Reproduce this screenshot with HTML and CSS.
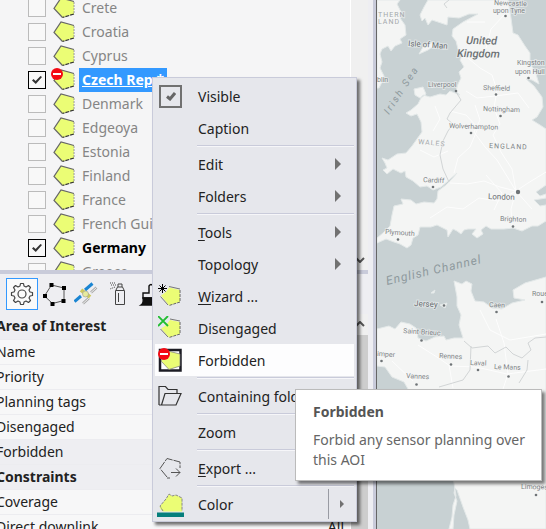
FILE: index.html
```html
<!DOCTYPE html>
<html lang="en">
<head>
    <meta charset="UTF-8">
    <meta name="viewport" content="width=device-width, initial-scale=1.0">
    <title>Areas of Interest</title>
    <link rel="stylesheet" href="styles.css">
</head>
<body>
    <!-- shared icon shapes -->
    <svg class="symbols" aria-hidden="true">
        <symbol id="aoi" viewBox="0 0 22 22">
            <path d="M1 11.5 8 1 21 4.500V17L9.500 20.500Z" fill="#ebfd75"/>
            <path d="M9.500 20.500 1 11.500 8 1 21 4.500" fill="none" stroke="#666" stroke-width="1.200"/>
            <path d="M21 5V17" stroke="#999" stroke-dasharray="2 1"/>
            <path d="M21 17 9.500 20.500" stroke="#333" stroke-width="1.200" stroke-dasharray="4 1"/>
        </symbol>
        <symbol id="stop" viewBox="0 0 12 12">
            <circle cx="6" cy="6" r="6" fill="#f40a14"/>
            <path d="M2 6H10" stroke="#fff" stroke-width="2"/>
        </symbol>
    </svg>

    <div class="app">
        <div class="sidebar">
            <div class="tree-panel">
                <ul class="tree">
                    <li><input type="checkbox" id="a1"><svg class="aoi"><use href="#aoi"/></svg><label for="a1">Crete</label></li>
                    <li><input type="checkbox" id="a2"><svg class="aoi"><use href="#aoi"/></svg><label for="a2">Croatia</label></li>
                    <li><input type="checkbox" id="a3"><svg class="aoi"><use href="#aoi"/></svg><label for="a3">Cyprus</label></li>
                    <li class="selected"><input type="checkbox" id="a4" checked><svg class="aoi"><use href="#aoi"/><use href="#stop" x="-2" y="-1" width="12" height="12"/></svg><label for="a4">Czech Rep.*</label></li>
                    <li><input type="checkbox" id="a5"><svg class="aoi"><use href="#aoi"/></svg><label for="a5">Denmark</label></li>
                    <li><input type="checkbox" id="a6"><svg class="aoi"><use href="#aoi"/></svg><label for="a6">Edgeoya</label></li>
                    <li><input type="checkbox" id="a7"><svg class="aoi"><use href="#aoi"/></svg><label for="a7">Estonia</label></li>
                    <li><input type="checkbox" id="a8"><svg class="aoi"><use href="#aoi"/></svg><label for="a8">Finland</label></li>
                    <li><input type="checkbox" id="a9"><svg class="aoi"><use href="#aoi"/></svg><label for="a9">France</label></li>
                    <li><input type="checkbox" id="a10"><svg class="aoi"><use href="#aoi"/></svg><label for="a10">French Guiana</label></li>
                    <li class="active"><input type="checkbox" id="a11" checked><svg class="aoi"><use href="#aoi"/></svg><label for="a11">Germany</label></li>
                    <li><input type="checkbox" id="a12"><svg class="aoi"><use href="#aoi"/></svg><label for="a12">Greece</label></li>
                </ul>
                <div class="scrollbar down">
                    <svg viewBox="0 0 10 6"><path d="M1 1 5 5 9 1"/></svg>
                </div>
            </div>

            <div class="props-panel">
                <div class="toolbar">
                    <button class="tool on" aria-label="Properties">
                        <svg viewBox="0 0 24 24" fill="none" stroke="#444" stroke-width="1.200">
                            <path d="M10 4 10.500 1.500H13.500L14 4 16 5 18.500 3.500 20.500 5.500 19 8 20 10 22.500 10.500V13.500L20 14 19 16 20.500 18.500 18.500 20.500 16 19 14 20 13.500 22.500H10.500L10 20 8 19 5.500 20.500 3.500 18.500 5 16 4 14 1.500 13.500V10.500L4 10 5 8 3.500 5.500 5.500 3.500 8 5Z" stroke-linejoin="round"/>
                            <circle cx="12" cy="12" r="4"/>
                        </svg>
                    </button>
                    <button class="tool" aria-label="Shape">
                        <svg viewBox="0 0 24 24">
                            <path d="M2.500 14 9.500 3 22 6V18.500L10.500 21.500Z" fill="none" stroke="#555"/>
                            <path d="M1 12H5V16H1ZM7.500 1H11.500V5H7.500ZM20 4H24V8H20ZM19.500 17H23.500V21H19.500ZM8.500 20H12.500V24H8.500Z"/>
                        </svg>
                    </button>
                    <button class="tool" aria-label="Satellite">
                        <svg viewBox="0 0 24 24">
                            <path d="M18.500 1.500 11 8M7 14 0.500 19.500" stroke="#1b85d2" stroke-width="3"/>
                            <path d="M22.500 5.500 17 10.500M15 16 9 21.500" stroke="#aaa" stroke-width="2.600"/>
                            <path d="M22.500 5.500 17 10.500M15 16 9 21.500" stroke="#f0f0f0"/>
                            <path d="M7 8 16 15" stroke="#cfc95c" stroke-width="4"/>
                            <circle cx="11.500" cy="12" r="3" fill="#e7ea9c" stroke="#999" stroke-width=".6"/>
                        </svg>
                    </button>
                    <button class="tool" aria-label="Spray">
                        <svg viewBox="0 0 24 24" fill="none" stroke="#444">
                            <path d="M9.500 8.500H18.500V22.500H9.500ZM10 8 11.500 5H16.500L18 8M12 5V2H16V5M12.500 11V20"/>
                            <path d="M10 3H4M9 5 4 7M9 1 4 1" stroke-dasharray="1 1"/>
                        </svg>
                    </button>
                    <button class="tool" aria-label="Brush">
                        <svg viewBox="0 0 24 24" fill="none" stroke="#111" stroke-width="1.400">
                            <path d="M11 11V4Q13 1 15 4V11H21V16H5V11Z"/>
                            <path d="M5 16H21V23H3Q6 21 5 16Z" fill="#111"/>
                        </svg>
                    </button>
                </div>
                <div class="props-body">
                    <table class="props">
                        <tr class="group"><th colspan="2">Area of Interest</th></tr>
                        <tr><td>Name</td><td></td></tr>
                        <tr><td>Priority</td><td></td></tr>
                        <tr><td>Planning tags</td><td></td></tr>
                        <tr><td>Disengaged</td><td></td></tr>
                        <tr class="current"><td>Forbidden</td><td></td></tr>
                        <tr class="group"><th colspan="2">Constraints</th></tr>
                        <tr><td>Coverage</td><td></td></tr>
                        <tr><td>Direct downlink</td><td>All</td></tr>
                    </table>
                    <div class="scrollbar up">
                        <svg viewBox="0 0 10 6"><path d="M1 5 5 1 9 5"/></svg>
                        <div class="thumb"></div>
                    </div>
                </div>
            </div>
        </div>

        <div class="map">
            <svg viewBox="377 0 169 529" preserveAspectRatio="xMinYMin slice">
                <g class="land">
                    <!-- Ireland -->
                    <path d="M377 0H400L397 4 401 12 400 18 405 25 406 35 400 39 402 43 395 46 391 51 388 46 382 49 380 54 382 62 380 68 384 76 381 84 379 88H377Z"/>
                    <!-- Isle of Man -->
                    <path d="M419 54 423 47 433 42 435 45 428 50Z"/>
                    <!-- Great Britain -->
                    <path d="M428 0 424 7 420 15 422 21 425 18 428 25 432 20 441 23 447 25 448 17 459 18 469 14 478 14 463 22 453 29 452 36 456 41 458 49 463 54 460 60 464 67 459 72 461 78 458 84 456 91 460 95 450 91 446 95 440 94 430 97 423 95 420 98 415 95 414 89 423 87 426 94 421 98 418 104 411 110 406 113 411 116 417 114 421 122 422 132 417 139 412 146 406 153 397 154 388 160 382 158 385 163 387 168 383 170 387 174 393 169 401 173 405 171 406 177 413 181 420 187 427 186 433 190 441 187 448 181 457 173 452 179 446 185 438 191 437 199 434 203 424 202 416 204 411 200 401 199 403 204 394 206 392 215 390 226 383 233 377 238V243L386 239 394 242 400 244 407 248 411 245 413 238 418 235 420 227 431 227 437 225 447 230 448 237 453 229 457 231 461 234 464 230 468 229 476 229 472 234 477 238 483 234 481 230 486 226 491 229 504 229 513 228 522 231 532 226 538 226 546 221V205L540 206 534 200 546 198V194L540 196 536 192 546 185V129L540 125 532 120 537 117 543 107 542 97 534 86 526 79 532 80 539 84 536 74 530 63 530 53 525 46 518 35 513 33 511 18 508 0Z"/>
                    <!-- France -->
                    <path d="M377 329 389 326 395 329 401 322 410 324 416 328 418 338 426 341 435 337 444 336 446 340 454 338 463 338 459 325 461 315 457 306 457 297 454 281 462 284 466 281 472 284 471 291 475 301 484 302 492 308 502 309 512 303 525 300 514 298 513 290 525 283 546 277V529H470L468 520 463 507 457 490 455 488 454 493 457 501 454 515 453 529H449L452 517 453 505 456 496 454 483 445 460 443 440 432 424 420 407 408 389 404 382 392 377 385 367 377 366Z"/>
                    <path d="M431 293 435 290 434 293ZM440 305 447 303 445 308Z"/>
                </g>
                <g class="roads">
                    <path d="M463 54 480 68 492 75 497 90 494 108 500 124 493 135 501 152 512 169 516 191M466 91 477 98 495 96 518 93 529 108M475 105 480 120 474 132 485 147 497 160 516 191 532 209M450 111 466 115 478 128 470 147 458 158 454 173M450 183 467 184 484 181 500 187 516 191 528 183 546 172M430 218 447 207 463 209 479 198 498 201 516 191 511 209 512 225M486 48 491 29 505 14M467 22 485 22M435 106 440 119 433 131M420 150 434 157 448 151M494 210 502 193 486 175M480 310 490 330 510 340 546 334M418 345 440 359 450 366 476 367 507 374 546 369M392 361 413 381M449 365 453 388M496 319 504 343 508 374 503 389"/>
                </g>
                <g class="borders">
                    <path d="M449 0 444 4 447 8M456 92 461 100 450 113 447 119 453 124 448 131 443 141 440 155 443 169 449 182M464 341 472 348 488 346 495 353 506 347 513 354 522 358 531 350 528 343 535 338 546 337M471 346 470 370 463 380 439 387M528 360 527 370 519 383"/>
                </g>
                <g class="water">
                    <text transform="translate(389 115) rotate(-57)" class="sea small">Irish Sea</text>
                    <text transform="translate(387 285) rotate(-13)" class="sea">English Channel</text>
                </g>
                <g class="labels">
                    <text x="378" y="17" class="region">THERN</text>
                    <text x="378" y="24" class="region">LAND</text>
                    <text x="377" y="82">blin</text>
                    <text x="494" y="5" transform="rotate(2 494 5)">Newcastle</text>
                    <text x="493" y="13">upon Tyne</text>
                    <text x="408" y="46" class="place" transform="rotate(4 408 46)">Isle of Man</text>
                    <text x="466" y="44" class="country" transform="rotate(1 466 44)">United</text>
                    <text x="457" y="57" class="country" transform="rotate(1 457 57)">Kingdom</text>
                    <text x="517" y="65">Kingston</text>
                    <text x="515" y="74">upon Hull</text>
                    <text x="428" y="87">Liverpool</text>
                    <text x="483" y="90" transform="rotate(2 483 90)">Sheffield</text>
                    <text x="483" y="111" transform="rotate(2 483 111)">Nottingham</text>
                    <text x="449" y="128" transform="rotate(2 449 128)">Wolverhampton</text>
                    <text x="418" y="144" class="region" transform="rotate(5 418 144)">WALES</text>
                    <text x="489" y="148" class="nation" transform="rotate(2 489 148)">ENGLAND</text>
                    <text x="423" y="182" transform="rotate(3 423 182)">Cardiff</text>
                    <text x="488" y="199" class="place" transform="rotate(2 488 199)">London</text>
                    <text x="500" y="221" transform="rotate(2 500 221)">Brighton</text>
                    <text x="385" y="234" transform="rotate(4 385 234)">Plymouth</text>
                    <text x="414" y="306" class="place" transform="rotate(3 414 306)">Jersey</text>
                    <text x="489" y="307" transform="rotate(2 489 307)">Caen</text>
                    <text x="532" y="296">Rouen</text>
                    <text x="403" y="333" transform="rotate(4 403 333)">Saint-Brieuc</text>
                    <text x="377" y="356" transform="rotate(4 377 356)">imper</text>
                    <text x="439" y="358" transform="rotate(3 439 358)">Rennes</text>
                    <text x="470" y="365" transform="rotate(2 470 365)">Laval</text>
                    <text x="494" y="369" transform="rotate(2 494 369)">Le Mans</text>
                    <text x="406" y="378" transform="rotate(3 406 378)">Vannes</text>
                    <text x="521" y="489" transform="rotate(1 521 489)">Limoges</text>
                </g>
                <g class="dots">
                    <circle cx="505.500" cy="16" r="1.300"/><circle cx="528.500" cy="78" r="1.300"/><circle cx="456" cy="91" r="1.300"/>
                    <circle cx="496" cy="94.500" r="1.300"/><circle cx="500.500" cy="116" r="1.300"/><circle cx="471" cy="133" r="1.300"/>
                    <circle cx="433" cy="187" r="1.300"/><circle cx="518" cy="192" r="2.200"/><circle cx="513" cy="226.500" r="1.300"/>
                    <circle cx="398" cy="239.500" r="1.300"/><circle cx="444" cy="305.500" r="1.300"/><circle cx="496.500" cy="312" r="1.300"/>
                    <circle cx="542" cy="302" r="1.300"/><circle cx="421.500" cy="340.500" r="1.300"/><circle cx="381.500" cy="361" r="1.300"/>
                    <circle cx="451" cy="364.500" r="1.300"/><circle cx="478" cy="370" r="1.300"/><circle cx="508.500" cy="376.500" r="1.300"/>
                    <circle cx="416.500" cy="384.500" r="1.300"/><circle cx="536" cy="495" r="1.300"/>
                </g>
            </svg>
        </div>

        <div class="menu" role="menu">
            <button role="menuitem"><span class="icon"><span class="check-box"><svg viewBox="0 0 10 9"><path d="M1 4.500 4 7 9 1"/></svg></span></span>Visible</button>
            <button role="menuitem"><span class="icon"></span>Caption</button>
            <hr>
            <button role="menuitem"><span class="icon"></span>Edit<span class="arrow"></span></button>
            <button role="menuitem"><span class="icon"></span>Folders<span class="arrow"></span></button>
            <hr>
            <button role="menuitem"><span class="icon"></span><span><u>T</u>ools</span><span class="arrow"></span></button>
            <button role="menuitem"><span class="icon"></span>Topology<span class="arrow"></span></button>
            <button role="menuitem"><span class="icon"><svg viewBox="0 0 24 24">
                <path d="M3 11.500 8 8 11 3.500 22 6V18L11 21.500Z" fill="#ebfd75"/>
                <path d="M11 2.500 22 5M2.500 12.500 10 21" fill="none" stroke="#777"/>
                <path d="M22 6V18L11 21.500" fill="none" stroke="#666" stroke-dasharray="3 1"/>
                <path d="M4.500 0V9M0 4.500H9M1.500 1.500 7.500 7.500M7.500 1.500 1.500 7.500" stroke="#000"/>
            </svg></span><span><u>W</u>izard ...</span></button>
            <button role="menuitem"><span class="icon"><svg viewBox="0 0 24 24">
                <path d="M3 12.500 7 10 12 4 22 6V18L11 21.500Z" fill="#ebfd75"/>
                <path d="M12 3 22 5M2.500 13 10 21" fill="none" stroke="#777"/>
                <path d="M22 6V18L11 21.500" fill="none" stroke="#666" stroke-dasharray="3 1"/>
                <path d="M0 0 10 10M10 0 0 10" stroke="#20bd32" stroke-width="1.800"/>
            </svg></span>Disengaged</button>
            <button role="menuitem" class="hover"><span class="icon"><svg viewBox="0 0 24 24">
                <path d="M2 2H22.500V22.500H2Z" fill="#fff" stroke="#1c1c24" stroke-width="2.500"/>
                <path d="M3 13 10 3 22 6V18L11 21.500Z" fill="#ebfd75" stroke="#777" stroke-width=".7"/>
                <use href="#stop" x="0" y="0" width="12" height="12"/>
            </svg></span>Forbidden</button>
            <hr>
            <button role="menuitem"><span class="icon"><svg viewBox="0 0 24 24">
                <path d="M1 21V2.500H7.500L10 5.500H19V9M1 21H18L23 9.500H7L3.500 21" fill="none" stroke="#333" stroke-width="1.200"/>
            </svg></span>Containing folder</button>
            <hr>
            <button role="menuitem"><span class="icon"></span>Zoom<span class="arrow"></span></button>
            <hr>
            <button role="menuitem"><span class="icon"><svg viewBox="0 0 24 24" fill="none" stroke="#555">
                <path d="M9 21 2 12.500 9 2.500 22 6V12M9 22H12" stroke-dasharray="9 1"/>
                <path d="M13 16.500H22M18 12.500 22 16.500 18 20.500"/>
            </svg></span><span><u>E</u>xport ...</span></button>
            <hr>
            <button role="menuitem"><span class="icon color"><svg viewBox="0 0 27 25">
                <path d="M3 14 9 7 12 2 15 4 19 3 25 6V19.500H6Q2 17 3 14Z" fill="#ebfd75"/>
                <path d="M6 19 3 14 9 7 12 2 15 4 19 3 25 6V19" fill="none" stroke="#888" stroke-dasharray="3 1"/>
                <path d="M0 20.500H27V25H0Z" fill="#067f7c"/>
            </svg></span>Color<span class="split"><span class="arrow small"></span></span></button>
        </div>

        <div class="tooltip" role="tooltip">
            <strong>Forbidden</strong>
            <p>Forbid any sensor planning over this AOI</p>
        </div>
    </div>
</body>
</html>
```
FILE: styles.css
```css
:root {
    --panel: #f5f5f6;
    --chrome: #eeeef2;
    --line: #c9cbda;
    --menu: #e6e7ec;
    --text: #222;
    --muted: #858585;
    --select: #3399ff;
}

* {
    box-sizing: border-box;
}

body {
    margin: 0;
    font-family: "Noto Sans", "Open Sans", sans-serif;
    font-size: 14px;
    color: var(--text);
}

.symbols {
    display: none;
}

button {
    font: inherit;
    color: inherit;
    border: none;
    background: none;
    padding: 0;
}

.app {
    position: relative;
    display: flex;
    height: 100vh;
    overflow: hidden;
    background: var(--chrome);
}

.sidebar {
    flex: 0 0 377px;
    display: flex;
    flex-direction: column;
    padding-right: 4px;
    border-right: 1px solid #666;
    box-shadow: inset -3px 0 var(--line);
}

/* area list */
.tree-panel {
    flex: 0 0 274px;
    display: flex;
    margin-right: 4px;
    overflow: hidden;
    background: var(--panel);
    border-bottom: 4px solid var(--line);
}

.tree {
    flex: 1;
    list-style: none;
    margin: -4px 0 0;
    padding: 0 0 0 28px;
}

.tree li {
    display: flex;
    align-items: center;
    height: 24px;
    color: var(--muted);
}

.tree input {
    appearance: none;
    display: grid;
    place-items: center;
    width: 18px;
    height: 18px;
    margin: 0;
    background: #f8f8f8;
    border: 1px solid #bbb;
}

.tree input:checked {
    border-color: #000;
}

.tree input:checked::before {
    content: "";
    width: 10px;
    height: 8px;
    background: #333;
    clip-path: polygon(0 55%, 15% 38%, 36% 62%, 85% 0, 100% 12%, 38% 100%);
}

.tree .aoi {
    width: 22px;
    height: 22px;
    margin: 0 4px 0 7px;
    overflow: visible;
}

.tree label {
    padding: 0 3px;
    line-height: 24px;
    white-space: nowrap;
}

.tree .selected label {
    color: #fff;
    font-weight: bold;
    text-decoration: underline;
    background: var(--select);
}

.tree .active label {
    color: #000;
    font-weight: bold;
}

/* scroll bars */
.scrollbar {
    flex: 0 0 18px;
    display: flex;
    flex-direction: column;
    align-items: center;
    background: #f0f0f0;
    border-left: 1px solid #fff;
}

.scrollbar.down {
    justify-content: flex-end;
    padding-bottom: 7px;
}

.scrollbar svg {
    width: 10px;
    height: 6px;
    fill: none;
    stroke: #555;
    stroke-width: 2;
}

.scrollbar .thumb {
    flex: 1;
    width: 100%;
    margin-top: 8px;
    background: #cdcdcd;
}

/* properties */
.props-panel {
    flex: 1;
    display: flex;
    flex-direction: column;
    min-height: 0;
    margin-right: 4px;
}

.toolbar {
    display: flex;
    padding: 4px 0 4px 6px;
}

.tool {
    width: 32px;
    height: 32px;
    display: grid;
    place-items: center;
}

.tool.on {
    background: #fafafa;
    border: 1px solid var(--select);
}

.tool svg {
    width: 24px;
    height: 24px;
}

.props-body {
    flex: 1;
    display: flex;
    min-height: 0;
    overflow: hidden;
}

.props {
    flex: 1;
    margin-left: -8px;
    border-collapse: collapse;
    table-layout: fixed;
    display: table;
    height: 225px;
}

.props th,
.props td {
    height: 25px;
    padding: 0 4px;
    line-height: 24px;
    text-align: left;
    white-space: nowrap;
    background: #f7f7f8;
    border-bottom: 1px solid #ececf0;
}

.props td:last-child {
    padding-right: 6px;
    text-align: right;
}

.props .group th,
.props .current td {
    background: var(--chrome);
}

.up {
    padding-top: 7px;
}

/* map */
.map {
    flex: 1;
    min-width: 0;
    background: #c8d1d3;
}

.map svg {
    display: block;
    width: 100%;
    height: 100%;
    font-family: Roboto, "Open Sans", sans-serif;
}

.land {
    fill: #f4f5f4;
    stroke: #e4e9e9;
    stroke-width: 1;
}

.roads,
.borders {
    fill: none;
    stroke: #fdfdfd;
}

.borders {
    stroke: #d2d5d6;
}

.labels {
    font-size: 7px;
    fill: #7f8486;
    stroke: #f6f7f7;
    stroke-width: 2;
    stroke-opacity: .5;
    paint-order: stroke;
}

.labels .place {
    font-size: 8px;
    fill: #686d70;
}

.labels .country {
    font-size: 11px;
    font-weight: 500;
    font-style: italic;
    fill: #6b7073;
}

.labels .region {
    letter-spacing: 1px;
    fill: #a3a8aa;
}

.labels .nation {
    letter-spacing: 1px;
}

.sea {
    font-size: 12px;
    font-style: italic;
    letter-spacing: 1px;
    fill: #8e999d;
}

.sea.small {
    font-size: 10px;
    letter-spacing: 2px;
}

.dots {
    fill: #6f7477;
}

/* context menu */
.menu {
    position: absolute;
    left: 152px;
    top: 77px;
    width: 205px;
    padding: 2px 2px 1px;
    background: var(--menu);
    border: 1px solid var(--line);
    box-shadow: 3px 3px 3px rgba(0, 0, 0, 0.55);
}

.menu button {
    display: flex;
    align-items: center;
    width: 100%;
    height: 32px;
    padding: 0 13px 0 3px;
    text-align: left;
    white-space: nowrap;
}

.menu button.hover {
    background: #fdfdfe;
}

.menu hr {
    height: 2px;
    margin: 1px 0 1px 42px;
    border: none;
    border-top: 1px solid var(--line);
    background: #f6f6f9;
}

.menu u {
    text-underline-offset: 2px;
}

.icon {
    flex: 0 0 40px;
    display: flex;
}

.icon svg {
    width: 24px;
    height: 24px;
}

.icon.color svg {
    width: 27px;
    height: 25px;
    margin-left: -1px;
}

.icon .check-box {
    display: grid;
    place-items: center;
    width: 23px;
    height: 23px;
    margin-left: 1px;
    border: 2px solid #717171;
}

.icon .check-box svg {
    width: 10px;
    height: 9px;
    fill: none;
    stroke: #666;
    stroke-width: 3;
}

.arrow {
    margin-left: auto;
    border: 6px solid transparent;
    border-left-color: #717171;
    border-right: none;
}

.arrow.small {
    margin: 0;
    border-width: 4px;
    border-right: none;
}

.split {
    display: flex;
    align-items: center;
    justify-content: center;
    width: 26px;
    height: 30px;
    margin: 0 -13px 0 auto;
    border-left: 1px solid #999ba3;
}

/* tooltip */
.tooltip {
    position: absolute;
    left: 295px;
    top: 389px;
    width: 247px;
    padding: 12px 14px 10px 17px;
    color: #666;
    line-height: 20px;
    background: #fff;
    border: 1px solid #bbb;
    box-shadow: 3px 3px 3px rgba(0, 0, 0, 0.5);
}

.tooltip strong {
    color: #555;
}

.tooltip p {
    margin: 8px 0 0;
}
```
